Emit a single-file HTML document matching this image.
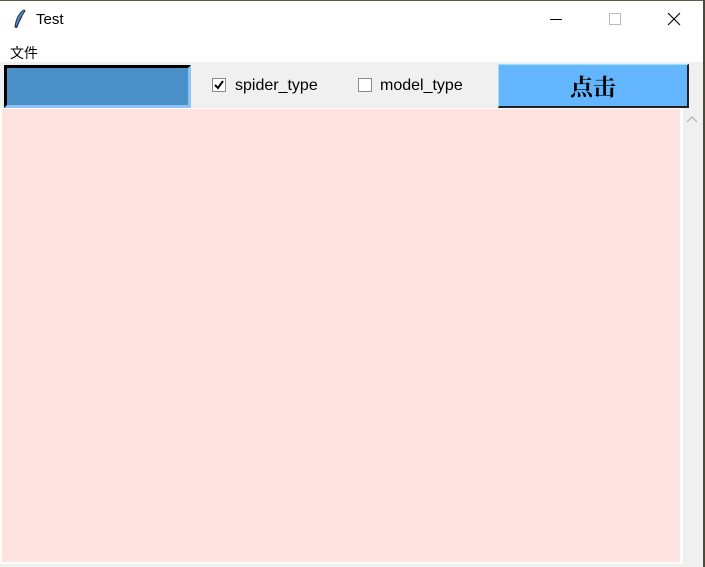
<!DOCTYPE html>
<html><head><meta charset="utf-8"><style>
*{margin:0;padding:0;box-sizing:border-box}
body{width:705px;height:567px;background:#f0f0f0;position:relative;overflow:hidden;font-family:"Liberation Sans","Noto Sans CJK SC",sans-serif;font-size:15px;color:#000}
.a{position:absolute}
</style></head><body>
<div class="a" style="left:0;top:0;width:705px;height:62px;background:#fff"></div>
<div class="a" style="left:0;top:0;width:705px;height:1px;background:#5a5a48"></div>
<svg class="a" style="left:13px;top:9px" width="14" height="20" viewBox="0 0 14 20"><path d="M11 1 C6 4 3 10 2 18 L4 18 C6 12 9 6 12 2Z" fill="#5f8cc9" stroke="#1a2a4a" stroke-width="1"/><path d="M3 19 L9 7" stroke="#1a2a4a" stroke-width="1"/></svg>
<div class="a" style="left:36px;top:11px;font-size:15px">Test</div>
<div class="a" style="left:550px;top:19px;width:12px;height:1px;background:#000"></div>
<div class="a" style="left:609px;top:13px;width:12px;height:12px;border:1px solid #bbb"></div>
<svg class="a" style="left:667px;top:12px" width="14" height="14"><path d="M1 1L13 13M13 1L1 13" stroke="#000" stroke-width="1.1"/></svg>
<div class="a" style="left:10px;top:43px;font-size:14px;font-family:'Noto Sans CJK SC',sans-serif">文件</div>
<div class="a" style="left:4px;top:65px;width:187px;height:43px;background:#4a90c8;border-top:3px solid #000;border-left:3px solid #000;border-right:3px solid #8fc3f5;border-bottom:3px solid #8fc3f5"></div>
<div class="a" style="left:212px;top:78px;width:14px;height:14px;background:#fff;border:1px solid #888"></div>
<svg class="a" style="left:213px;top:79px" width="12" height="12"><path d="M2 6L5 9L10 2" stroke="#000" stroke-width="2" fill="none"/></svg>
<div class="a" style="left:235px;top:77px;font-size:16px">spider_type</div>
<div class="a" style="left:358px;top:78px;width:14px;height:14px;background:#fff;border:1px solid #888"></div>
<div class="a" style="left:380px;top:77px;font-size:16px">model_type</div>
<div class="a" style="left:498px;top:64px;width:191px;height:44px;background:#63b6fe;border-top:1px solid #a0e0f0;border-left:1px solid #a0e0f0;border-right:2px solid #222;border-bottom:2px solid #222;text-align:center;font-family:'Noto Serif CJK SC',serif;font-weight:bold;font-size:23px;line-height:41px">点击</div>
<div class="a" style="left:0;top:108px;width:683px;height:456px;background:#fff"></div>
<div class="a" style="left:2px;top:109px;width:678px;height:453px;background:#ffe3e0"></div>
<svg class="a" style="left:686px;top:116px" width="12" height="8"><path d="M1 6L6 1L11 6" stroke="#aaa" fill="none"/></svg>
<div class="a" style="left:703px;top:0;width:2px;height:567px;background:#4a4a3a"></div>
</body></html>
